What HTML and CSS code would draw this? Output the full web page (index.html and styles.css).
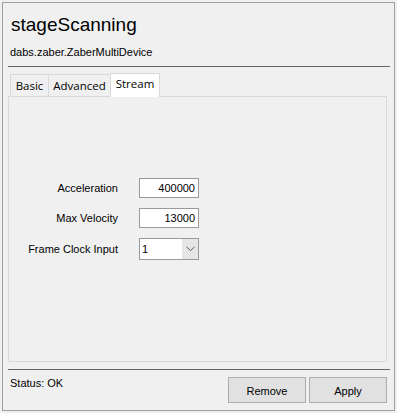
FILE: index.html
```html
<!DOCTYPE html>
<html>
<head>
<meta charset="utf-8">
<link rel="stylesheet" href="styles.css">
</head>
<body>
<div class="frame">
  <div class="title">stageScanning</div>
  <div class="subtitle">dabs.zaber.ZaberMultiDevice</div>
  <div class="rule rule-top"></div>
  <div class="tabs">
    <div class="tab tab-basic">Basic</div>
    <div class="tab tab-adv">Advanced</div>
    <div class="tab tab-stream active">Stream</div>
  </div>
  <div class="panel">
    <div class="form">
      <div class="label">Acceleration</div>
      <div class="field">400000</div>
      <div class="label">Max Velocity</div>
      <div class="field">13000</div>
      <div class="label">Frame Clock Input</div>
      <div class="select">
        <span class="select-value">1</span>
        <span class="select-arrow"><svg width="9" height="6" viewBox="0 0 9 6"><path d="M0.5 0.8 L4.5 4.6 L8.5 0.8" fill="none" stroke="#5a5a5a" stroke-width="1"/></svg></span>
      </div>
    </div>
  </div>
  <div class="rule rule-bottom"></div>
  <div class="footer">
    <div class="status">Status: OK</div>
    <div class="buttons">
      <div class="btn">Remove</div>
      <div class="btn">Apply</div>
    </div>
  </div>
</div>
</body>
</html>
```
FILE: styles.css
```css
* { box-sizing: border-box; }
body {
  margin: 0;
  background: #f0f0f0;
  font-family: "Liberation Sans", Arial, sans-serif;
  color: #000;
}
.frame {
  width: 393px;
  height: 409px;
  margin: 2px 0 0 2px;
  border: 1px solid #a0a0a0;
  padding: 0 4px 0 5px;
}
.title {
  margin-top: 11px;
  padding-left: 3px;
  font-size: 19px;
  line-height: 22px;
  height: 22px;
}
.subtitle {
  margin-top: 10px;
  padding-left: 2px;
  font-size: 11px;
  line-height: 13px;
  height: 13px;
}
.rule {
  height: 1px;
  background: #646464;
}
.rule-top { margin-top: 7px; }
.tabs {
  margin-top: 6px;
  padding-left: 2px;
  display: flex;
  align-items: flex-end;
  height: 23px;
  font-family: "Open Sans", "Noto Sans", sans-serif;
  font-size: 11.5px;
  line-height: 15px;
}
.tab {
  height: 22px;
  border: 1px solid #d9d9d9;
  border-bottom: none;
  background: #f0f0f0;
  padding-top: 3px;
  text-align: center;
  margin-right: -1px;
}
.tab-basic { width: 39px; }
.tab-adv { width: 63px; }
.tab-stream { width: 50px; }
.tab.active {
  height: 24px;
  padding-top: 2px;
  background: #fff;
  margin-bottom: -1px;
  position: relative;
  z-index: 1;
}
.panel {
  width: 379px;
  height: 266px;
  border: 1px solid #d9d9d9;
  background: #f0f0f0;
  padding-top: 81px;
}
.form {
  display: grid;
  grid-template-columns: 109px 60px;
  column-gap: 21px;
  row-gap: 10px;
  align-items: center;
  font-size: 11px;
}
.label {
  text-align: right;
  line-height: 13px;
}
.field {
  height: 20px;
  border: 1px solid #9a9a9a;
  background: #fff;
  text-align: right;
  padding-right: 3px;
  line-height: 18px;
}
.select {
  height: 22px;
  border: 1px solid #9a9a9a;
  background: #fff;
  display: flex;
}
.select-value {
  flex: 1;
  padding-left: 2px;
  line-height: 21px;
}
.select-arrow {
  width: 16px;
  background: #e6e6e6;
  display: flex;
  align-items: center;
  justify-content: center;
}
.rule-bottom { margin-top: 7px; }
.footer {
  margin-top: 7px;
  display: flex;
  justify-content: space-between;
  padding-right: 3px;
  font-size: 11px;
}
.status {
  padding-left: 2px;
  line-height: 13px;
  padding-top: 0;
}
.buttons {
  display: flex;
  gap: 3px;
}
.btn {
  width: 78px;
  height: 26px;
  border: 1px solid #adadad;
  background: #e1e1e1;
  text-align: center;
  line-height: 26px;
}
```
